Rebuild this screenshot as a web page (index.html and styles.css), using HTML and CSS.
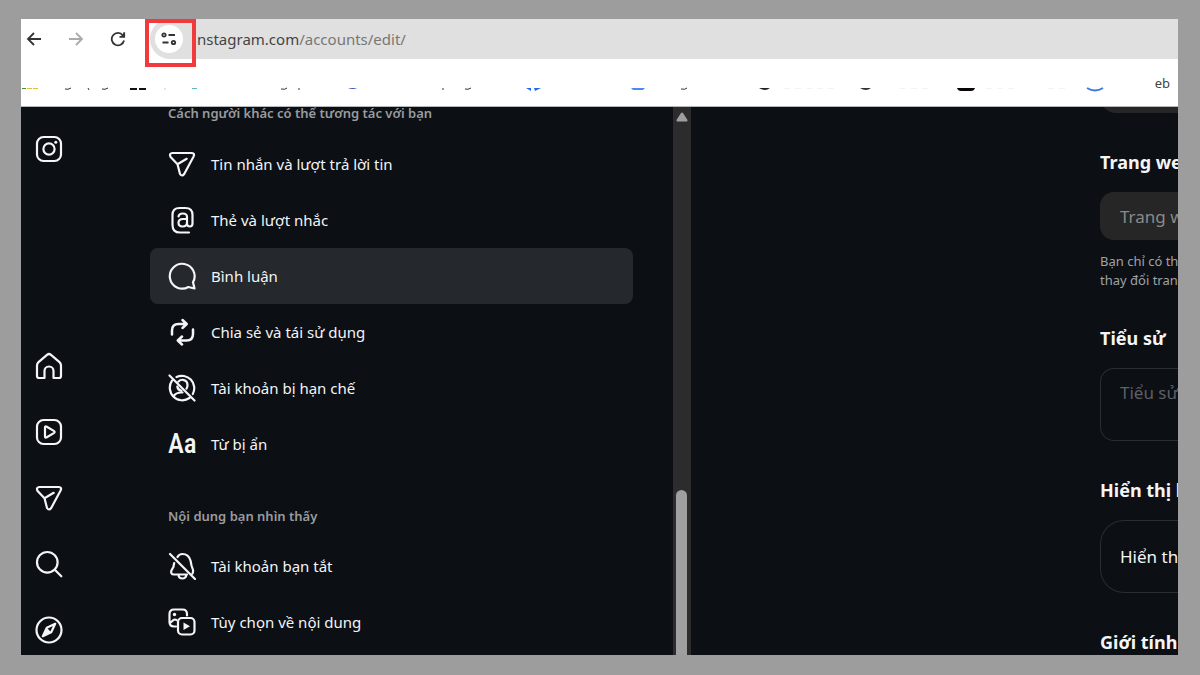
FILE: index.html
```html
<!DOCTYPE html>
<html lang="vi">
<head>
<meta charset="utf-8">
<title>Instagram</title>
<link rel="stylesheet" href="styles.css">
</head>
<body>
<div class="window">
  <header class="toolbar">
    <nav class="nav">
      <button class="nav-btn" aria-label="Back"><svg width="16" height="16" viewBox="0 0 16 16"><path d="M15 8H2M8 2L2 8l6 6"/></svg></button>
      <button class="nav-btn nav-btn-off" aria-label="Forward"><svg width="16" height="16" viewBox="0 0 16 16"><path d="M1 8h13M8 2l6 6-6 6"/></svg></button>
      <button class="nav-btn" aria-label="Reload"><svg width="16" height="16" viewBox="0 0 16 16"><path d="M14 9.500A6.200 6.200 0 1 1 12.800 4.300L14 5.600M14.200 1.300v4.600H9.500"/><path class="solid" d="M14.200 2v4H10z"/></svg></button>
    </nav>
    <div class="address">
      <button class="site-info" aria-label="Site information"><svg width="16" height="16" viewBox="0 0 16 16"><circle cx="3" cy="4" r="1.700"/><path d="M7.500 4h6.500M1.500 11.500h6"/><circle cx="12.500" cy="11.500" r="1.700"/></svg></button>
      <span class="url"><b>nstagram.com</b>/accounts/edit/</span>
      <span class="marker"></span>
    </div>
  </header>
  <div class="bookmarks">
    <svg class="marks" width="1090" height="5" viewBox="21 87 1090 5">
      <path d="M22 88.500h4" stroke="#4f8a3a"/><path d="M27 88.500h11" stroke="#e8bd3c" stroke-dasharray="5 1"/>
      <g stroke="#333" fill="none"><path d="M65 89q3 1 6-1M88 88l1 2M102 89q3 1 6-1M281 89q4 1 6-1M299 88v2M443 88v2M465 89q3 1 6-1M681 89q4 1 6-1"/></g>
      <path d="M130 89h7M139 89h7" stroke="#111" stroke-width="2"/>
      <path d="M165 88v2" stroke="#ccc"/><path d="M192 88.500h5" stroke="#62b2cc"/>
      <path d="M348 88h9q-4 2-9 0z" fill="#3a55b8"/>
      <path d="M526 88h5v3zM534 88h7l-6 3z" fill="#2468f2"/>
      <path d="M631 88h14l-2 2h-10z" fill="#4f86f5"/>
      <path d="M759 88h11q-5 4-11 0z" fill="#222"/><path d="M860 88h11q-5 4-11 0z" fill="#333"/>
      <path d="M957 88h18q-1 3-4 3h-10q-3 0-4-3z" fill="#090406"/>
      <path d="M1087 88q8 5 16 0" stroke="#3d7be0" stroke-width="2" fill="none"/>
      <path d="M784 88.500h50M900 88.500h34M986 88.500h28M1048 88.500h18" stroke="#f3f3f3" stroke-dasharray="6 5"/>
    </svg>
    <span class="bookmark-label">eb</span>
  </div>
  <main class="page">
    <nav class="rail">
      <a class="rail-link" href="#" aria-label="Instagram"><svg class="icon" viewBox="0 0 28 28"><rect x="2" y="2" width="24" height="24" rx="6.500"/><circle cx="14" cy="14" r="5.600"/><circle class="dot" cx="20.800" cy="7.200" r="1.500"/></svg></a>
      <div class="rail-group">
        <a class="rail-link" href="#" aria-label="Home"><svg class="icon" viewBox="0 0 28 28"><path d="M4 26h5.500v-7a4.500 4.500 0 0 1 9 0v7H24q2 0 2-2V13.500q0-2-1.500-3.400L16 2.800q-2-1.600-4 0L3.500 10.100Q2 11.500 2 13.500V24q0 2 2 2z"/></svg></a>
        <a class="rail-link" href="#" aria-label="Reels"><svg class="icon" viewBox="0 0 28 28"><rect x="2" y="2" width="24" height="24" rx="6.500"/><path d="M10 9.700v8.600q0 2 1.800 1l7-4.200q1.700-1.100 0-2.200l-7-4.200q-1.800-1-1.800 1z"/></svg></a>
        <a class="rail-link" href="#" aria-label="Messages"><svg class="icon" viewBox="0 0 28 28"><path d="M4.200 3h19.600q3.300.4 1.800 3.400L16.200 24q-2.200 3-4.200 0L9.500 14.200 2.600 7Q.8 3.500 4.200 3zM9.500 14.200 18.700 8.800"/></svg></a>
        <a class="rail-link" href="#" aria-label="Search"><svg class="icon" viewBox="0 0 28 28"><circle cx="12.300" cy="12.300" r="10.300"/><path d="M19.800 19.800 26.300 26.300"/></svg></a>
        <a class="rail-link" href="#" aria-label="Explore"><svg class="icon" viewBox="0 0 28 28"><circle cx="14" cy="14" r="12.500"/><path d="M20.200 7.800 11.800 11.800 7.800 20.200 16.200 16.200z"/><path class="solid" d="M11.800 11.800 7.800 20.200 16.200 16.200z"/></svg></a>
      </div>
    </nav>
    <section class="settings">
      <h2 class="group-title group-title-first">Cách người khác có thể tương tác với bạn</h2>
      <a class="item" href="#"><svg class="icon" viewBox="0 0 28 28"><path d="M4.200 3h19.600q3.300.4 1.800 3.400L16.200 24q-2.200 3-4.200 0L9.500 14.200 2.600 7Q.8 3.500 4.200 3zM9.500 14.200 18.700 8.800"/></svg>Tin nhắn và lượt trả lời tin</a>
      <a class="item" href="#"><svg class="icon" viewBox="0 0 28 28"><path d="M21 26.500h-9q-7.500 0-7.500-7.500V9Q4.500 2 11.500 2h6Q24.500 2 24.500 9v8.500q0 3-2.600 3-2.900 0-2.900-3V11Q19 7.500 14.700 7.500q-3.700 0-4.200 3M19 13h-4q-4.500 0-4.500 3.800 0 3.700 4 3.700 4.500 0 4.500-4"/></svg>Thẻ và lượt nhắc</a>
      <a class="item item-active" href="#"><svg class="icon" viewBox="0 0 28 28"><path d="M26.500 26.500 25 20.300A12.400 12.400 0 1 0 20.300 25z"/></svg>Bình luận</a>
      <a class="item" href="#"><svg class="icon icon-bold" viewBox="0 0 28 28"><path d="M4 16.500v-4q0-6.500 6.500-6.500h8M14.500 2l4.200 4-4.200 4M25 11.500v4.500q0 6.500-6.500 6.500h-8M14 18.500l-4.200 4 4.200 4"/></svg>Chia sẻ và tái sử dụng</a>
      <a class="item" href="#"><svg class="icon" viewBox="0 0 28 28"><path d="M1.500 1.500l25 25M8.500 3A12.400 12.400 0 0 1 24.800 20M21.500 24A12.500 12.500 0 0 1 4 6.700M10.500 7.500q2-2 4.500-1.700 4.500.8 4.500 5.200 0 2.200-1 3.600M9.300 12.500q.5 3.500 4 4.300M5.500 22.500q2-4 8-4h1"/></svg>Tài khoản bị hạn chế</a>
      <a class="item" href="#"><span class="type-sample" aria-hidden="true">Aa</span>Từ bị ẩn</a>
      <h2 class="group-title">Nội dung bạn nhìn thấy</h2>
      <a class="item" href="#"><svg class="icon" viewBox="0 0 28 28"><path d="M2 2l25 25M9.500 5Q11 2 14.500 2q6 0 8 6.500l1 5 1.500 4.500q.3 2-.5 3.500M6.200 11l-.8 4-2 3.500q-1 4 2.500 4H19M10.500 22.500q0 4 4 4 3 0 3.800-3"/></svg>Tài khoản bạn tắt</a>
      <a class="item" href="#"><svg class="icon" viewBox="0 0 28 28"><path d="M8 18.500H6Q1.500 18.500 1.500 14V6Q1.500 1.500 6 1.500h8.500q4.500 0 4.500 4.500v1.500M2 15l3.500-3q1.500-1 3 0"/><circle class="dot" cx="6.500" cy="6.500" r="1.700"/><rect x="10" y="10" width="16.500" height="16.500" rx="4"/><path class="solid" d="M15.500 14.500v7.500l6.500-3.800z"/></svg>Tùy chọn về nội dung</a>
    </section>
    <div class="scrollbar">
      <svg class="scroll-arrow" viewBox="0 0 12 10"><path d="M5 1q1-1 2 0l4.500 7q.3 1.500-1 1.500h-9Q.2 9.500.5 8z"/></svg>
      <div class="scroll-thumb"></div>
    </div>
    <form class="form">
      <div class="field-tail"></div>
      <label class="label" for="site">Trang web</label>
      <input class="input" id="site" placeholder="Trang web" disabled>
      <p class="help">Bạn chỉ có thể<br>thay đổi trang</p>
      <label class="label" for="bio">Tiểu sử</label>
      <textarea class="textarea" id="bio" placeholder="Tiểu sử"></textarea>
      <h3 class="label">Hiển thị h</h3>
      <div class="option">Hiển thị</div>
      <h3 class="label">Giới tính</h3>
    </form>
  </main>
</div>
</body>
</html>
```
FILE: styles.css
```css
* { box-sizing: border-box; }

body {
  margin: 0;
  height: 100vh;
  padding: 19px 22px 20px 21px;
  background: #9d9d9d;
  font-family: "Noto Sans", "Open Sans", sans-serif;
  display: flex;
}

button { border: 0; padding: 0; background: none; }

.window {
  flex: 1;
  min-width: 0;
  display: flex;
  flex-direction: column;
  overflow: hidden;
  background: #fff;
}

.toolbar { display: flex; height: 40px; flex: none; }

.nav {
  width: 129px;
  display: flex;
  align-items: center;
  gap: 26px;
  padding-left: 5px;
}

.nav-btn { width: 16px; height: 16px; display: flex; color: #333; }
.nav-btn-off { color: #aaa; }
.nav-btn svg, .site-info svg { fill: none; stroke: currentColor; stroke-width: 1.8; }
.nav-btn .solid { fill: currentColor; stroke: none; }

.address {
  position: relative;
  flex: 1;
  display: flex;
  align-items: center;
  gap: 14px;
  padding-left: 5px;
  background: #e0e0e0;
  border-radius: 20px 0 0 20px;
}

.site-info {
  width: 28px;
  height: 28px;
  border-radius: 50%;
  background: #fff;
  color: #333;
  display: flex;
  align-items: center;
  justify-content: center;
}

.url { font-size: 15px; line-height: 24px; color: #777; }
.url b { font-weight: 400; color: #444; }

.marker {
  position: absolute;
  left: -5px;
  top: 0;
  width: 51px;
  height: 48px;
  border: 4px solid #f03a3d;
}

.bookmarks {
  flex: none;
  height: 48px;
  display: flex;
  justify-content: space-between;
  align-items: center;
  padding-right: 8px;
  border-bottom: 1px solid #b4b8ba;
}

.marks { display: block; margin-top: 14px; }
.bookmark-label { font-size: 13px; line-height: 20px; color: #444; }

.page {
  flex: 1;
  min-height: 0;
  display: flex;
  background: #0c0f14;
  color: #f3f5f7;
}

.rail {
  width: 129px;
  flex: none;
  padding: 28px 0 0 14px;
}

.rail-group {
  margin-top: 189px;
  display: flex;
  flex-direction: column;
  gap: 38px;
}

.rail-link { display: block; width: 28px; height: 28px; color: inherit; }

.icon {
  display: block;
  width: 28px;
  height: 28px;
  flex: none;
  fill: none;
  stroke: currentColor;
  stroke-width: 2.2;
  stroke-linejoin: round;
  stroke-linecap: round;
}

.icon .dot, .icon .solid { fill: currentColor; stroke: none; }
.icon-bold { stroke-width: 2.5; }

.type-sample {
  width: 28px;
  flex: none;
  text-align: center;
  font: 500 27px/32px "Roboto Condensed", "Liberation Sans Narrow", sans-serif;
}

.settings { width: 483px; flex: none; overflow: hidden; }

.group-title {
  margin: 0;
  padding: 34px 18px 12px;
  font-size: 13px;
  line-height: 20px;
  font-weight: 600;
  color: #999c9f;
}

.group-title-first { padding-top: 0; padding-bottom: 13px; margin-top: -4px; }

.item {
  height: 56px;
  display: flex;
  align-items: center;
  gap: 15px;
  padding: 0 18px;
  border-radius: 8px;
  font-size: 15px;
  line-height: 24px;
  color: inherit;
  text-decoration: none;
}

.item-active { background: #25282d; }

.scrollbar {
  width: 18px;
  flex: none;
  margin-left: 40px;
  padding: 5px 4px 0 3px;
  background: #2c2c2c;
  display: flex;
  flex-direction: column;
}

.scroll-arrow { width: 12px; height: 10px; flex: none; fill: #9f9f9f; }

.scroll-thumb {
  flex: 1;
  margin-top: 368px;
  border-radius: 6px 6px 0 0;
  background: #9f9f9f;
}

.form {
  flex: 1;
  min-width: 0;
  margin-left: 409px;
  overflow: hidden;
  white-space: nowrap;
}

.field-tail { height: 48px; border-radius: 0 0 0 16px; background: #262626; margin: -42px 0 37px; }

.label {
  display: block;
  margin: 0;
  font-size: 18px;
  line-height: 24px;
  font-weight: 700;
}

.input, .textarea, .option {
  display: block;
  width: 100%;
  margin: 18px 0 0;
  padding: 0 0 0 19px;
  border: 1px solid #292c31;
  border-right: 0;
  border-radius: 14px 0 0 14px;
  background: transparent;
  color: inherit;
  font: 17px/24px "Noto Sans", "Open Sans", sans-serif;
}

.input { height: 48px; background: #262626; border-color: #262626; }
.input::placeholder { color: #8a8a8a; opacity: 1; }
.help { margin: 12px 0 36px; font-size: 13px; line-height: 19px; color: #a0a2a5; }
.textarea { height: 73px; padding-top: 12px; resize: none; overflow: hidden; margin-bottom: 37px; }
.textarea::placeholder { color: #5d6065; opacity: 1; }
.option { height: 73px; border-radius: 24px 0 0 24px; padding-top: 24px; margin-bottom: 37px; }
```
